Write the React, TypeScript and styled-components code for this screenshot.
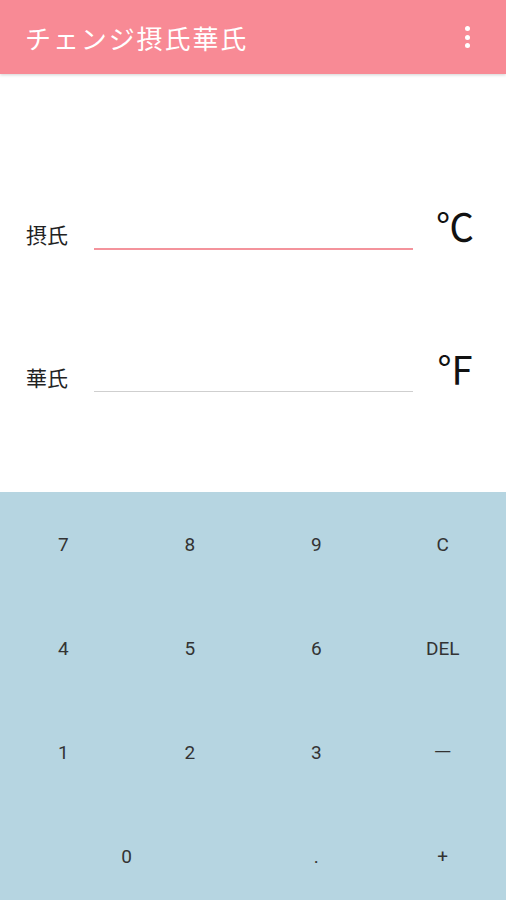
import React from "react";
import styled, { createGlobalStyle } from "styled-components";

const Global = createGlobalStyle`
  html, body { margin: 0; padding: 0; background: #fff; overflow: hidden; }
  body { font-family: Roboto, "Noto Sans CJK JP", sans-serif; }
`;

const Screen = styled.div`
  width: 506px;
  height: 900px;
  display: flex;
  flex-direction: column;
  overflow: hidden;
`;

const AppBar = styled.header`
  height: 74px;
  flex: none;
  background: #f88a95;
  display: flex;
  align-items: center;
  justify-content: space-between;
  padding: 0 36px 0 25px;
  box-shadow: 0 1px 3px rgba(0, 0, 0, 0.18);
  position: relative;
  z-index: 1;
`;

const Title = styled.h1`
  margin: 0;
  color: #fff;
  font-family: "Noto Sans CJK JP", sans-serif;
  font-weight: 400;
  font-size: 26px;
  letter-spacing: 1.9px;
`;

const Overflow = styled.div`
  display: flex;
  flex-direction: column;
  gap: 3.5px;
`;

const Dot = styled.span`
  width: 5px;
  height: 5px;
  border-radius: 50%;
  background: #fff;
`;

const Form = styled.main`
  flex: 1;
  display: flex;
  flex-direction: column;
  gap: 85px;
  padding: 118px 0 0 26px;
  background: #fff;
`;

const Row = styled.div`
  display: flex;
  align-items: flex-end;
  height: 58px;
`;

const Label = styled.span`
  width: 68px;
  font-family: "Noto Sans CJK JP", sans-serif;
  font-size: 21px;
  color: #222;
  line-height: 1;
  padding-bottom: 5px;
`;

const Field = styled.div<{ $active?: boolean }>`
  width: 319px;
  height: 40px;
  border-bottom: ${(p) => (p.$active ? "2px solid #f4939c" : "1px solid #cfcfcf")};
  margin-bottom: ${(p) => (p.$active ? "0" : "1px")};
`;

const Unit = styled.span`
  margin: 14px 0 0 23px;
  font-family: "Noto Sans CJK JP", sans-serif;
  font-weight: 400;
  font-size: 38px;
  line-height: 1;
  color: #111;
  align-self: flex-start;
`;

const Keypad = styled.section`
  flex: none;
  height: 408px;
  background: #b6d5e1;
  display: grid;
  grid-template-columns: repeat(4, 1fr);
  grid-auto-rows: 104px;
`;

const Key = styled.button<{ $span?: number; $cjk?: boolean }>`
  grid-column: span ${(p) => p.$span ?? 1};
  border: none;
  background: transparent;
  font-family: ${(p) => (p.$cjk ? '"Noto Sans CJK JP", sans-serif' : "Roboto, sans-serif")};
  font-size: 19px;
  color: #333;
  padding: 0 0 ${(p) => (p.$cjk ? "8px" : "0")};
  display: flex;
  align-items: center;
  justify-content: center;
`;

const keys: { label: string; span?: number; cjk?: boolean }[] = [
  { label: "7" }, { label: "8" }, { label: "9" }, { label: "C" },
  { label: "4" }, { label: "5" }, { label: "6" }, { label: "DEL" },
  { label: "1" }, { label: "2" }, { label: "3" }, { label: "—", cjk: true },
  { label: "0", span: 2 }, { label: "." }, { label: "+" },
];

export default function App() {
  return (
    <Screen>
      <Global />
      <AppBar>
        <Title>チェンジ摂氏華氏</Title>
        <Overflow>
          <Dot />
          <Dot />
          <Dot />
        </Overflow>
      </AppBar>
      <Form>
        <Row>
          <Label>摂氏</Label>
          <Field $active />
          <Unit>℃</Unit>
        </Row>
        <Row>
          <Label>華氏</Label>
          <Field />
          <Unit>℉</Unit>
        </Row>
      </Form>
      <Keypad>
        {keys.map((k) => (
          <Key key={k.label} $span={k.span} $cjk={k.cjk}>
            {k.label}
          </Key>
        ))}
      </Keypad>
    </Screen>
  );
}
